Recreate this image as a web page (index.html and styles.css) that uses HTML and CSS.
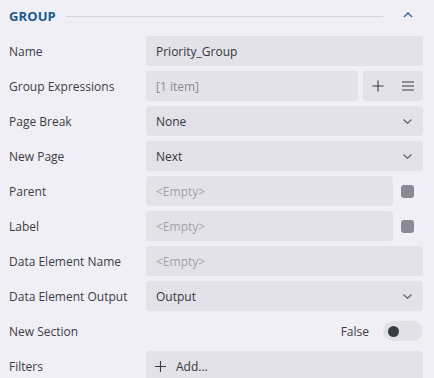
FILE: index.html
```html
<!DOCTYPE html>
<html>
<head>
<meta charset="utf-8">
<link rel="stylesheet" href="styles.css">
</head>
<body>
<div class="panel">
  <div class="header">
    <span class="title">GROUP</span>
    <span class="rule"></span>
    <svg class="collapse" width="10" height="6" viewBox="0 0 10 6"><path d="M1 5 L5 1 L9 5" fill="none" stroke="#3f6fa3" stroke-width="1.6"/></svg>
  </div>
  <div class="rows">
    <div class="row">
      <div class="label">Name</div>
      <div class="field"><div class="input"><span class="value">Priority_Group</span></div></div>
    </div>
    <div class="row">
      <div class="label">Group Expressions</div>
      <div class="field">
        <div class="input"><span class="muted">[1 item]</span></div>
        <div class="btns">
          <svg width="12" height="12" viewBox="0 0 12 12"><path d="M6 0.5 V11.5 M0.5 6 H11.5" stroke="#3a3a44" stroke-width="1.1"/></svg>
          <svg width="12" height="10" viewBox="0 0 12 10"><path d="M0 1 H12 M0 5 H12 M0 9 H12" stroke="#3a3a44" stroke-width="1.1"/></svg>
        </div>
      </div>
    </div>
    <div class="row">
      <div class="label">Page Break</div>
      <div class="field"><div class="input select"><span class="value">None</span>
        <svg class="chev" width="9" height="5" viewBox="0 0 9 5"><path d="M0.5 0.5 L4.5 4.3 L8.5 0.5" fill="none" stroke="#6a6a76" stroke-width="1.3"/></svg></div></div>
    </div>
    <div class="row">
      <div class="label">New Page</div>
      <div class="field"><div class="input select"><span class="value">Next</span>
        <svg class="chev" width="9" height="5" viewBox="0 0 9 5"><path d="M0.5 0.5 L4.5 4.3 L8.5 0.5" fill="none" stroke="#6a6a76" stroke-width="1.3"/></svg></div></div>
    </div>
    <div class="row">
      <div class="label">Parent</div>
      <div class="field"><div class="input"><span class="placeholder">&lt;Empty&gt;</span></div><span class="marker"><span class="sq"></span></span></div>
    </div>
    <div class="row">
      <div class="label">Label</div>
      <div class="field"><div class="input"><span class="placeholder">&lt;Empty&gt;</span></div><span class="marker"><span class="sq"></span></span></div>
    </div>
    <div class="row">
      <div class="label">Data Element Name</div>
      <div class="field"><div class="input"><span class="placeholder">&lt;Empty&gt;</span></div></div>
    </div>
    <div class="row">
      <div class="label">Data Element Output</div>
      <div class="field"><div class="input select"><span class="value">Output</span>
        <svg class="chev" width="9" height="5" viewBox="0 0 9 5"><path d="M0.5 0.5 L4.5 4.3 L8.5 0.5" fill="none" stroke="#6a6a76" stroke-width="1.3"/></svg></div></div>
    </div>
    <div class="row">
      <div class="label">New Section</div>
      <div class="field toggle-field"><span class="tlabel">False</span><span class="toggle"><span class="knob"></span></span></div>
    </div>
    <div class="row">
      <div class="label">Filters</div>
      <div class="field"><div class="input add">
        <svg width="11" height="11" viewBox="0 0 11 11"><path d="M5.5 0 V11 M0 5.5 H11" stroke="#3a3a44" stroke-width="1.1"/></svg>
        <span class="value">Add...</span></div></div>
    </div>
  </div>
</div>
</body>
</html>
```
FILE: styles.css
```css
html, body {
  margin: 0;
  padding: 0;
  background: #f0eff5;
}
body {
  font-family: "Open Sans", "Noto Sans", sans-serif;
  font-size: 12px;
  color: #3c3c46;
}
.panel {
  padding: 0 11px 0 9px;
}
.header {
  height: 36px;
  display: flex;
  align-items: center;
  padding-bottom: 4px;
  box-sizing: border-box;
}
.title {
  font-weight: 700;
  font-size: 13px;
  color: #1c5a8c;
  letter-spacing: 0.1px;
}
.rule {
  flex: 1;
  height: 1px;
  background: #cfd9e6;
  margin: 1px 20px 0 10px;
}
.collapse {
  margin-right: 10px;
  margin-top: -2px;
}
.rows {
  display: flex;
  flex-direction: column;
  gap: 5px;
}
.row {
  display: flex;
  align-items: center;
  height: 30px;
}
.label {
  width: 137px;
  flex: none;
  color: #3c3c46;
}
.field {
  flex: 1;
  display: flex;
  gap: 5px;
  height: 30px;
  align-items: center;
}
.input {
  flex: 1;
  height: 30px;
  background: #e3e2e8;
  border-radius: 4px;
  display: flex;
  align-items: center;
  padding: 0 11px 0 10px;
  box-sizing: border-box;
}
.value { color: #363640; }
.muted { color: #8a8a94; }
.placeholder { color: #a2a2ae; }
.select { justify-content: space-between; }
.chev { margin-top: 1px; }
.btns {
  width: 60px;
  height: 30px;
  background: #e3e2e8;
  border-radius: 4px;
  display: flex;
  align-items: center;
  justify-content: space-between;
  padding: 0 9px 0 9px;
  box-sizing: border-box;
}
.marker {
  width: 25px;
  display: flex;
  justify-content: flex-start;
  padding-left: 3px;
  box-sizing: border-box;
}
.sq {
  width: 13px;
  height: 13px;
  border-radius: 3px;
  background: #8a8a96;
}
.toggle-field {
  justify-content: flex-end;
  gap: 14px;
}
.tlabel { color: #3c3c46; }
.toggle {
  width: 40px;
  height: 20px;
  border-radius: 10px;
  background: #e2e1e7;
  display: flex;
  align-items: center;
  padding-left: 5px;
  box-sizing: border-box;
}
.knob {
  width: 11px;
  height: 11px;
  border-radius: 50%;
  background: #373c46;
}
.add {
  gap: 10px;
  padding-left: 9px;
}
```
